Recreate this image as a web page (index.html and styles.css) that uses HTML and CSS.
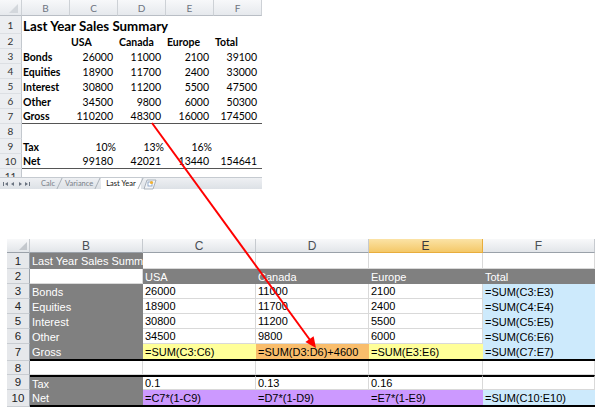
FILE: index.html
```html
<!DOCTYPE html>
<html>
<head>
<meta charset="utf-8">
<link rel="stylesheet" href="styles.css">
</head>
<body>
<div class="xl">
  <div class="xg">
    <div class="xh corner"><span class="tri"></span></div>
    <div class="xh">B</div><div class="xh">C</div><div class="xh">D</div><div class="xh">E</div><div class="xh">F</div>

    <div class="xr">1</div><div class="xc title">Last Year Sales Summary</div>

    <div class="xr">2</div><div class="xc"></div><div class="xc b">USA</div><div class="xc b">Canada</div><div class="xc b">Europe</div><div class="xc b">Total</div>

    <div class="xr">3</div><div class="xc b">Bonds</div><div class="xc n">26000</div><div class="xc n">11000</div><div class="xc n">2100</div><div class="xc n">39100</div>
    <div class="xr">4</div><div class="xc b">Equities</div><div class="xc n">18900</div><div class="xc n">11700</div><div class="xc n">2400</div><div class="xc n">33000</div>
    <div class="xr">5</div><div class="xc b">Interest</div><div class="xc n">30800</div><div class="xc n">11200</div><div class="xc n">5500</div><div class="xc n">47500</div>
    <div class="xr">6</div><div class="xc b">Other</div><div class="xc n">34500</div><div class="xc n">9800</div><div class="xc n">6000</div><div class="xc n">50300</div>
    <div class="xr">7</div><div class="xc b ln">Gross</div><div class="xc n ln">110200</div><div class="xc n ln">48300</div><div class="xc n ln">16000</div><div class="xc n ln">174500</div>
    <div class="xr">8</div><div class="xc"></div><div class="xc"></div><div class="xc"></div><div class="xc"></div><div class="xc"></div>
    <div class="xr">9</div><div class="xc b">Tax</div><div class="xc p">10%</div><div class="xc p">13%</div><div class="xc p">16%</div><div class="xc"></div>
    <div class="xr">10</div><div class="xc b ln">Net</div><div class="xc n ln">99180</div><div class="xc n ln">42021</div><div class="xc n ln">13440</div><div class="xc n ln">154641</div>
    <div class="xr cut">11</div><div class="xc"></div><div class="xc"></div><div class="xc"></div><div class="xc"></div><div class="xc"></div>
  </div>
  <div class="tabs">
    <svg class="nav" width="34" height="12" viewBox="0 0 34 12">
      <rect x="3" y="4" width="1" height="4" fill="#6a7380"/>
      <path d="M8 4 L5 6 L8 8 Z" fill="#6a7380"/>
      <path d="M14 4 L11 6 L14 8 Z" fill="#6a7380"/>
      <path d="M19 4 L22 6 L19 8 Z" fill="#6a7380"/>
      <path d="M25 4 L28 6 L25 8 Z" fill="#6a7380"/>
      <rect x="29" y="4" width="1" height="4" fill="#6a7380"/>
    </svg>
    <span class="tab">Calc</span>
    <span class="tab">Variance</span>
    <span class="tab active">Last Year</span>
    <svg class="newtab" width="14" height="12" viewBox="0 0 14 12">
      <path d="M1 11 L4 2 L13 2 L10 11 Z" fill="#f2f4f7" stroke="#9aa3ad" stroke-width="0.8"/>
      <rect x="5" y="4" width="4" height="4" fill="#fff" stroke="#7f9cc0" stroke-width="0.8"/>
      <circle cx="8.5" cy="4.5" r="1.6" fill="#f2b233"/>
    </svg>
  </div>
</div>

<div class="sheet">
  <div class="h corner2"><span class="tri2"></span></div>
  <div class="h">B</div><div class="h">C</div><div class="h">D</div><div class="h sel">E</div><div class="h">F</div>

  <div class="r">1</div><div class="c g">Last Year Sales Summary</div><div class="c w"></div><div class="c w"></div><div class="c w"></div><div class="c w"></div>
  <div class="r">2</div><div class="c w"></div><div class="c g">USA</div><div class="c g">Canada</div><div class="c g">Europe</div><div class="c g">Total</div>
  <div class="r">3</div><div class="c g">Bonds</div><div class="c w">26000</div><div class="c w">11000</div><div class="c w">2100</div><div class="c bl">=SUM(C3:E3)</div>
  <div class="r">4</div><div class="c g">Equities</div><div class="c w">18900</div><div class="c w">11700</div><div class="c w">2400</div><div class="c bl">=SUM(C4:E4)</div>
  <div class="r">5</div><div class="c g">Interest</div><div class="c w">30800</div><div class="c w">11200</div><div class="c w">5500</div><div class="c bl">=SUM(C5:E5)</div>
  <div class="r">6</div><div class="c g">Other</div><div class="c w">34500</div><div class="c w">9800</div><div class="c w">6000</div><div class="c bl">=SUM(C6:E6)</div>
  <div class="r">7</div><div class="c g tb">Gross</div><div class="c y tb">=SUM(C3:C6)</div><div class="c o tb">=SUM(D3:D6)+4600</div><div class="c y tb">=SUM(E3:E6)</div><div class="c bl tb">=SUM(C7:E7)</div>
  <div class="r">8</div><div class="c w"></div><div class="c w"></div><div class="c w"></div><div class="c w"></div><div class="c w"></div>
  <div class="r">9</div><div class="c g tt">Tax</div><div class="c w tt">0.1</div><div class="c w tt">0.13</div><div class="c w tt">0.16</div><div class="c w tt"></div>
  <div class="r">10</div><div class="c g tb">Net</div><div class="c pu tb">=C7*(1-C9)</div><div class="c pu tb">=D7*(1-D9)</div><div class="c pu tb">=E7*(1-E9)</div><div class="c bl tb">=SUM(C10:E10)</div>
</div>

<svg class="arrow" width="595" height="408" viewBox="0 0 595 408">
  <line x1="152" y1="123" x2="310" y2="340" stroke="#ff0000" stroke-width="2"/>
  <polygon points="316,348 305.4,342.1 313.6,336.2" fill="#ff0000"/>
</svg>
</body>
</html>
```

FILE: styles.css
```css
* { box-sizing: border-box; margin: 0; padding: 0; }
html, body { background: #fff; }
body {
  margin: 0;
  width: 595px;
  height: 408px;
  overflow: hidden;
  position: relative;
  font-family: "Liberation Sans", Arial, sans-serif;
}

/* ---------- top (rendered) sheet ---------- */
.xl { width: 262px; }
.xg {
  display: grid;
  grid-template-columns: 22px repeat(5, 48px);
  grid-template-rows: 16px 18px repeat(9, 15px) 8px;
  font-family: Lato, "Open Sans", sans-serif;
  font-size: 10.5px;
  color: #000;
  overflow: hidden;
}
.xh {
  background: linear-gradient(#f7f8fa, #e6e9ed);
  border-right: 1px solid #cdd1d6;
  border-bottom: 1px solid #b9bec5;
  color: #6d7480;
  font-size: 10px;
  display: flex;
  align-items: center;
  justify-content: center;
}
.corner { position: relative; }
.tri {
  position: absolute;
  right: 3px;
  bottom: 2px;
  width: 0;
  height: 0;
  border-left: 9px solid transparent;
  border-bottom: 9px solid #d3d7dc;
}
.xr {
  background: #eceef1;
  border-right: 1px solid #c3c8ce;
  border-bottom: 1px solid #dcdfe3;
  color: #333;
  font-size: 10px;
  display: flex;
  align-items: center;
  justify-content: center;
}
.xr.cut { align-items: flex-start; padding-top: 1px; overflow: hidden; border-bottom: 0; }
.xc {
  display: flex;
  align-items: center;
  padding-left: 1px;
  white-space: nowrap;
}
.xc.n { justify-content: flex-end; padding-right: 5px; }
.xc.p { justify-content: flex-end; padding-right: 2px; }
.b { font-weight: 700; }
.xc.ln { border-bottom: 1px solid #555; }
.title { grid-column: span 5; font-size: 13.3px; font-weight: 700; padding-top: 1px; }

.tabs {
  height: 12px;
  display: flex;
  align-items: center;
  background: linear-gradient(#eef0f3, #dde1e6);
  border-top: 1px solid #c5cad0;
  font-family: Lato, "Open Sans", sans-serif;
  font-size: 7.5px;
}
.nav { flex: none; }
.tab {
  position: relative;
  color: #7a8089;
  padding: 0 5px;
  height: 11px;
  line-height: 11px;
}
.tab::after {
  content: "";
  position: absolute;
  right: 0;
  top: 0;
  height: 11px;
  border-right: 1px solid #a9b0b8;
  transform: skewX(-25deg);
}
.tab:first-of-type { margin-left: 2px; }
.tab.active {
  background: #fff;
  color: #111;
  margin-left: 3px;
}
.newtab { margin-left: 2px; flex: none; }

/* ---------- bottom (formula) sheet ---------- */
.sheet {
  margin: 50px 0 0 7px;
  display: grid;
  grid-template-columns: 23px 113px 113px 113px 114px 112px;
  grid-template-rows: 14px 16px 15px 15px 15px 15px 15px 17px 14px 15px 17px;
  font-size: 11px;
  color: #000;
}
.h {
  background: linear-gradient(#f8f9fa, #e2e5e9);
  border-right: 1px solid #c6cacf;
  border-bottom: 1px solid #9aa1a9;
  color: #4a4f55;
  font-size: 12px;
  display: flex;
  align-items: center;
  justify-content: center;
}
.h.sel {
  background: linear-gradient(#fbe3a6, #f4c868);
  border-right-color: #e8ad3c;
  border-bottom-color: #e8ad3c;
  color: #3a3a3a;
}
.corner2 { position: relative; }
.tri2 {
  position: absolute;
  right: 2px;
  bottom: 2px;
  width: 0;
  height: 0;
  border-left: 8px solid transparent;
  border-bottom: 8px solid #c4c8cd;
}
.r {
  background: #e6e8eb;
  border-right: 1px solid #9aa1a9;
  border-bottom: 1px solid #c9cdd2;
  color: #222;
  font-size: 11.5px;
  display: flex;
  align-items: center;
  justify-content: center;
}
.c {
  display: flex;
  align-items: center;
  padding-left: 2px;
  white-space: nowrap;
  overflow: hidden;
}
.w { background: #fff; border-right: 1px solid #d9d9d9; border-bottom: 1px solid #d9d9d9; }
.g { background: #808080; color: #fff; }
.y { background: #ffff99; }
.o { background: #f9bd6b; }
.bl { background: #cdeafc; }
.pu { background: #cc99ff; }
.tb { border-bottom: 2px solid #000; }
.tt { border-top: 2px solid #000; }

.arrow {
  position: absolute;
  left: 0;
  top: 0;
  pointer-events: none;
}
```
